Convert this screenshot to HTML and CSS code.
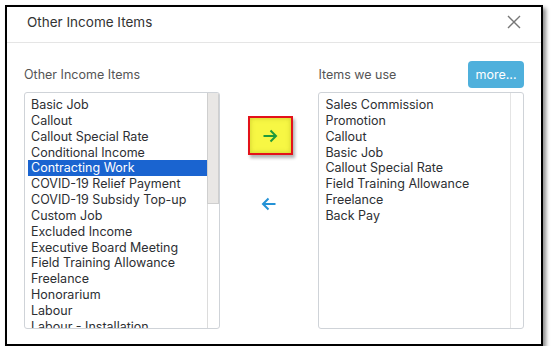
FILE: index.html
```html
<!DOCTYPE html>
<html>
<head>
<meta charset="utf-8">
<link rel="stylesheet" href="styles.css">
</head>
<body>
<div class="dialog">
  <div class="header">
    <span class="title">Other Income Items</span>
    <svg class="close" width="14" height="14" viewBox="0 0 14 14"><path d="M1 1L13 13M13 1L1 13" stroke="#777" stroke-width="1.4" fill="none"/></svg>
  </div>
  <div class="content">
    <div class="col left">
      <div class="colhead"><span class="label">Other Income Items</span></div>
      <div class="listbox">
        <ul class="options">
          <li>Basic Job</li>
          <li>Callout</li>
          <li>Callout Special Rate</li>
          <li>Conditional Income</li>
          <li class="selected">Contracting Work</li>
          <li>COVID-19 Relief Payment</li>
          <li>COVID-19 Subsidy Top-up</li>
          <li>Custom Job</li>
          <li>Excluded Income</li>
          <li>Executive Board Meeting</li>
          <li>Field Training Allowance</li>
          <li>Freelance</li>
          <li>Honorarium</li>
          <li>Labour</li>
          <li>Labour - Installation</li>
        </ul>
        <div class="scrollbar"><div class="thumb"></div></div>
      </div>
    </div>
    <div class="middle">
      <div class="addbtn">
        <svg width="16" height="14" viewBox="0 0 16 14"><path d="M1.5 7H14M8.5 1.5L14 7L8.5 12.5" stroke="#1f9a3c" stroke-width="2" fill="none"/></svg>
      </div>
      <div class="removebtn">
        <svg width="16" height="14" viewBox="0 0 16 14"><path d="M14.5 7H2M7.5 1.5L2 7L7.5 12.5" stroke="#2492d6" stroke-width="2" fill="none"/></svg>
      </div>
    </div>
    <div class="col right">
      <div class="colhead"><span class="label">Items we use</span><span class="more">more...</span></div>
      <div class="listbox rlist">
        <ul class="options">
          <li>Sales Commission</li>
          <li>Promotion</li>
          <li>Callout</li>
          <li>Basic Job</li>
          <li>Callout Special Rate</li>
          <li>Field Training Allowance</li>
          <li>Freelance</li>
          <li>Back Pay</li>
        </ul>
        <div class="track"></div>
      </div>
    </div>
  </div>
</div>
</body>
</html>
```

FILE: styles.css
```css
html, body {
  margin: 0;
  padding: 0;
  background: #fff;
}
body {
  padding: 5px 0 0 5px;
  font-family: Inter, "Liberation Sans", sans-serif;
}
.dialog {
  box-sizing: border-box;
  width: 538px;
  height: 341px;
  border: 2px solid #000;
  background: #fff;
  box-shadow: 3px 3px 4px rgba(0,0,0,0.45);
  display: flex;
  flex-direction: column;
}
.header {
  height: 29px;
  border-bottom: 1px solid #e5e5e5;
  display: flex;
  align-items: center;
  justify-content: space-between;
  padding: 0 20px 6px 20px;
  flex: none;
}
.title {
  font-size: 13.5px;
  color: #333;
}
.close {
  display: block;
}
.content {
  display: flex;
  padding: 18px 17px 0 17px;
}
.col {
  display: flex;
  flex-direction: column;
}
.left { width: 196px; }
.right { width: 206px; }
.colhead {
  height: 27px;
  display: flex;
  align-items: center;
  justify-content: space-between;
  margin-bottom: 4px;
}
.label {
  font-size: 12.5px;
  color: #555;
}
.more {
  box-sizing: border-box;
  width: 56px;
  height: 27px;
  background: #4fb0dc;
  color: #fff;
  border-radius: 4px;
  font-size: 12.5px;
  display: flex;
  align-items: center;
  justify-content: center;
}
.listbox {
  box-sizing: border-box;
  height: 237px;
  border: 1px solid #cfd3d8;
  border-radius: 3px;
  display: flex;
  overflow: hidden;
}
.options {
  list-style: none;
  margin: 0;
  padding: 4px 0 0 3px;
  flex: 1;
  overflow: hidden;
}
.options li {
  font-size: 12.5px;
  line-height: 15.85px;
  color: #2d2f33;
  padding-left: 3px;
  white-space: nowrap;
}
.options li.selected {
  background: #1a64d0;
  color: #fff;
}
.scrollbar {
  width: 12px;
  flex: none;
  border-left: 1px solid #dcdcdc;
  box-sizing: border-box;
  display: flex;
  flex-direction: column;
}
.thumb {
  height: 111px;
  background: #e9e7e5;
  border: 1px solid #cfcfcf;
  border-top: none;
  margin-left: -1px;
  box-sizing: border-box;
}
.track {
  width: 12px;
  flex: none;
  border-left: 1px solid #e4e4e4;
}
.middle {
  width: 99px;
  display: flex;
  flex-direction: column;
  align-items: center;
  padding-top: 55px;
}
.addbtn {
  box-sizing: border-box;
  width: 45px;
  height: 39px;
  border: 2px solid #e3121a;
  background: #f7f744;
  box-shadow: 2px 3px 3px rgba(0,0,0,0.3), inset 0 0 5px rgba(130,130,0,0.35);
  display: flex;
  align-items: center;
  justify-content: center;
  margin-left: 2px;
}
.removebtn {
  margin-top: 42px;
  display: flex;
  align-items: center;
  justify-content: center;
}
.addbtn svg, .removebtn svg { display: block; }
```
